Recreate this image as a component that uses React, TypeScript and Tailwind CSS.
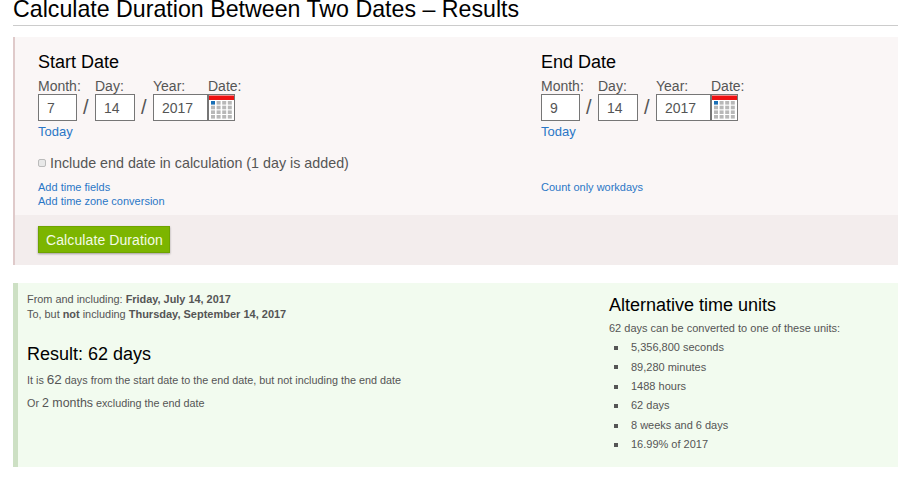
import React from 'react';

const CalendarIcon: React.FC = () => {
  const xs = [3, 8.6, 14.2, 19.8];
  const ys = [7, 11.7, 16.4, 21];
  return (
    <svg width="27" height="27" viewBox="0 0 27 27" className="block shrink-0">
      <rect x="0" y="0" width="27" height="27" fill="#767676" />
      <rect x="1" y="1" width="25" height="25" fill="#fff" />
      <rect x="1" y="1.5" width="25" height="4.5" fill="#ee1111" />
      {ys.map((y, row) =>
        xs.map((x, col) => (
          <rect
            key={`${row}-${col}`}
            x={x}
            y={y}
            width="4"
            height="3.6"
            fill={row === 0 && col === 0 ? '#1a6fb5' : '#b8b8b8'}
          />
        ))
      )}
    </svg>
  );
};

const DateColumn: React.FC<{ title: string; month: string; day: string; year: string }> = ({ title, month, day, year }) => {
  const inputClass = 'block h-[27px] border border-[#767676] bg-white pl-2 text-[14px] text-[#555] outline-none';
  return (
    <div>
      <h2 className="text-[18px] leading-[20px] text-black">{title}</h2>
      <div className="mt-[6px] flex items-end text-[14px] leading-[16px] text-[#555]">
        <div className="w-[39px] whitespace-nowrap">
          <div>Month:</div>
          <input readOnly value={month} className={`${inputClass} w-[39px]`} />
        </div>
        <span className="w-[18px] pb-[3px] pl-[6px] text-[20px] leading-[22px]">/</span>
        <div>
          <div>Day:</div>
          <input readOnly value={day} className={`${inputClass} w-[40px]`} />
        </div>
        <span className="w-[18px] pb-[3px] pl-[6px] text-[20px] leading-[22px]">/</span>
        <div>
          <div>Year:</div>
          <input readOnly value={year} className={`${inputClass} w-[55px]`} />
        </div>
        <div>
          <div>Date:</div>
          <CalendarIcon />
        </div>
      </div>
      <a className="mt-[3px] block text-[13px] leading-[16px] text-[#2a76c6]">Today</a>
    </div>
  );
};

const units = ['5,356,800 seconds', '89,280 minutes', '1488 hours', '62 days', '8 weeks and 6 days', '16.99% of 2017'];

export default function App() {
  return (
    <div className="h-[479px] overflow-hidden bg-white pl-[13px] pr-[9px] font-['Liberation_Sans',Arial,sans-serif] text-[#555]">
      <h1 className="border-b border-[#ccc] pb-[6px] text-[23.2px] leading-[19px] text-black">
        Calculate Duration Between Two Dates – Results
      </h1>

      <form className="mt-[11px] border-l-2 border-[#dfcaca] bg-[#faf6f6]">
        <div className="grid grid-cols-[503px_1fr] pl-[23px] pt-[15px]">
          <DateColumn title="Start Date" month="7" day="14" year="2017" />
          <DateColumn title="End Date" month="9" day="14" year="2017" />
        </div>
        <label className="ml-[23px] mt-[15px] flex h-[18px] items-center text-[14.3px] text-[#555]">
          <input type="checkbox" className="mb-[2px] mr-[4px] h-[8px] w-[8px] appearance-none rounded-[2px] border border-[#bbb] bg-[#e8e8e8]" />
          Include end date in calculation (1 day is added)
        </label>
        <div className="grid grid-cols-[503px_1fr] pl-[23px] pt-[7px] text-[11px] leading-[14px] text-[#2a76c6]">
          <div>
            <a className="block">Add time fields</a>
            <a className="block">Add time zone conversion</a>
          </div>
          <a>Count only workdays</a>
        </div>
        <div className="mt-[7px] h-[50px] bg-[#f3eded] pl-[23px] pt-[11px]">
          <button
            type="button"
            className="h-[27px] w-[132px] border border-[#6fa300] bg-[#7cb500] pl-px pt-[2px] text-[14px] tracking-[0.1px] text-[#f4fbe6] shadow-[0_1px_2px_rgba(0,0,0,0.35)]"
          >
            Calculate Duration
          </button>
        </div>
      </form>

      <section className="mt-[18px] flex h-[184px] border-l-[5px] border-[#cde0c4] bg-[#f2fbef]">
        <div className="w-[591px] pl-[9px] pt-[9px] text-[10.8px] text-[#555]">
          <div className="text-[10.9px] leading-[15px]">
            From and including: <b>Friday, July 14, 2017</b>
          </div>
          <div className="text-[10.9px] leading-[15px]">
            To, but <b>not</b> including <b className="text-[11px]">Thursday, September 14, 2017</b>
          </div>
          <h2 className="mt-[22px] text-[18px] leading-[20px] text-black">Result: 62 days</h2>
          <p className="mt-[6px] leading-[20px]">
            It is <span className="text-[13.5px]">62</span> days from the start date to the end date, but not including the end date
          </p>
          <p className="mt-[3px] leading-[20px]">
            Or <span className="text-[12.4px]">2 months</span> excluding the end date
          </p>
        </div>
        <div className="pt-[11px]">
          <h2 className="text-[18px] leading-[22px] text-black">Alternative time units</h2>
          <p className="mt-[5px] text-[11px] leading-[14px]">62 days can be converted to one of these units:</p>
          <ul className="mt-[3.2px] text-[11px] leading-[19.4px]">
            {units.map((unit) => (
              <li key={unit} className="flex items-center">
                <span className="ml-[5px] mr-[13px] h-[4px] w-[4px] bg-[#555]" />
                {unit}
              </li>
            ))}
          </ul>
        </div>
      </section>
    </div>
  );
}
